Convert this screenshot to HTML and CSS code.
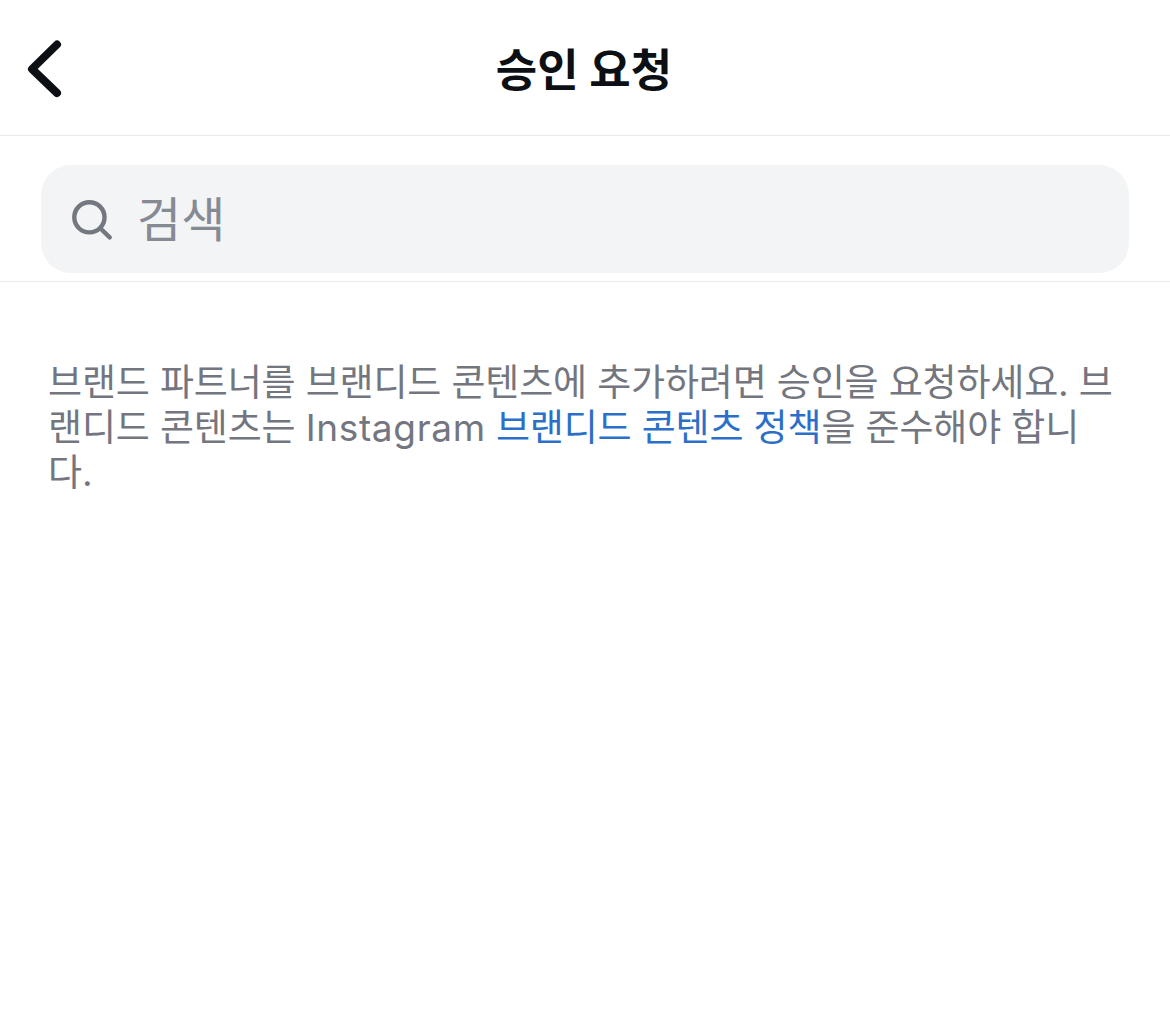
FILE: index.html
```html
<!DOCTYPE html>
<html lang="ko">
<head>
    <meta charset="UTF-8">
    <meta name="viewport" content="width=device-width, initial-scale=1.0">
    <title>승인 요청</title>
    <link rel="stylesheet" href="styles.css">
</head>
<body>
    <header class="header">
        <button class="back-btn" aria-label="뒤로">
            <svg width="40" height="64" viewBox="0 0 40 64" fill="none" stroke="currentColor" stroke-width="8" stroke-linecap="round" stroke-linejoin="round">
                <path d="M33 8.5 L8 33 L33 57"/>
            </svg>
        </button>
        <h1 class="title">승인 요청</h1>
    </header>

    <div class="search-bar">
        <label class="search">
            <svg class="search-icon" width="44" height="44" viewBox="0 0 44 44" fill="none" stroke="currentColor" stroke-width="4.4" stroke-linecap="round">
                <circle cx="19.4" cy="19.3" r="15.1"/>
                <path d="M30.5 30.5 L39.7 39.4"/>
            </svg>
            <input class="search-input" type="text" placeholder="검색">
        </label>
    </div>

    <main class="content">
        <p class="notice">
            <span class="line">브랜드 파트너를 브랜디드 콘텐츠에 추가하려면 승인을 요청하세요. 브</span>
            <span class="line">랜디드 콘텐츠는 <span class="latin">Instagram</span> <a class="link" href="#">브랜디드 콘텐츠 정책</a>을 준수해야 합니</span>
            <span class="line">다.</span>
        </p>
    </main>
</body>
</html>
```
FILE: styles.css
```css
* {
    box-sizing: border-box;
}
body {
    margin: 0;
    background-color: #fff;
    font-family: Inter, "Noto Sans CJK KR", sans-serif;
}
.header {
    display: grid;
    grid-template-columns: 80px 1fr 82px;
    align-items: center;
    height: 136px;
    border-bottom: 1px solid #e9eaec;
    color: #0c1014;
}
.back-btn {
    display: flex;
    padding: 0 0 0 24px;
    border: none;
    background: none;
    color: inherit;
    cursor: pointer;
}
.title {
    margin: 0;
    font-size: 45px;
    font-weight: 700;
    text-align: center;
    white-space: nowrap;
}
.search-bar {
    height: 146px;
    padding: 29px 41px 0;
    border-bottom: 1px solid #e9eaec;
}
.search {
    display: flex;
    align-items: center;
    height: 108px;
    padding: 0 29px;
    border-radius: 30px;
    background-color: #f2f4f6;
    color: #737780;
}
.search-icon {
    margin-top: 1px;
}
.search-input {
    flex: 1;
    margin-left: 23px;
    padding: 0;
    border: none;
    outline: none;
    background: none;
    font: inherit;
    font-size: 48px;
}
.search-input::placeholder {
    color: #868a92;
}
.content {
    padding: 78px 48px;
}
.notice {
    margin: 0;
    color: #73767e;
    font-size: 37px;
    line-height: 45px;
    letter-spacing: -0.16px;
}
.line {
    display: block;
    white-space: nowrap;
}
.latin {
    letter-spacing: 0.65px;
}
.link {
    color: #2b6fc9;
    text-decoration: none;
}
```
